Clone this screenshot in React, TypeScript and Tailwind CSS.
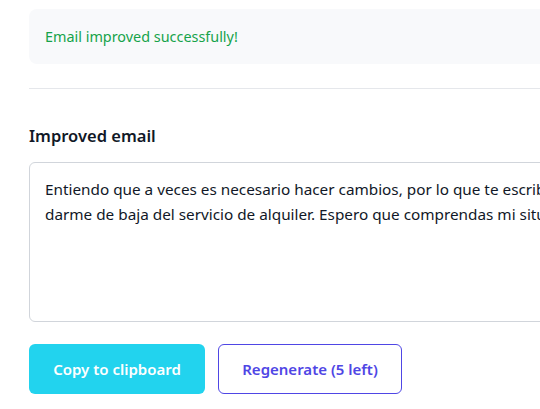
import React from "react";

export default function App() {
  return (
    <div
      className="w-[540px] h-[409px] overflow-hidden bg-white"
      style={{ fontFamily: '"Noto Sans", "Open Sans", sans-serif' }}
    >
      <div className="w-[700px] pl-[29px] pt-[9px]">
        <div className="h-[55px] rounded-lg bg-[#f8f9fb] flex items-center pl-[16px] pt-[1px] text-[14.4px] text-[#16a34a]">
          Email improved successfully!
        </div>
        <div className="mt-[24px] h-px bg-[#e5e7eb]" />
        <div className="mt-[35px] text-[16.5px] leading-6 font-semibold text-[#111827]">
          Improved email
        </div>
        <div className="mt-[14px] h-[160px] rounded-md border border-[#d1d5db] px-[15px] pt-[14px] text-[15.3px] leading-[25px] text-[#111827] whitespace-nowrap overflow-hidden">
          <div>Entiendo que a veces es necesario hacer cambios, por lo que te escribo para solicitar</div>
          <div>darme de baja del servicio de alquiler. Espero que comprendas mi situación y agradezco tu</div>
        </div>
        <div className="mt-[22px] flex gap-[13px]">
          <button className="h-[50px] w-[176px] rounded-md bg-[#22d3ee] text-white text-[15px] font-semibold">
            Copy to clipboard
          </button>
          <button className="h-[50px] w-[184px] rounded-md border border-[#4f46e5] bg-white text-[#4f46e5] text-[15px] font-semibold">
            Regenerate (5 left)
          </button>
        </div>
      </div>
    </div>
  );
}
